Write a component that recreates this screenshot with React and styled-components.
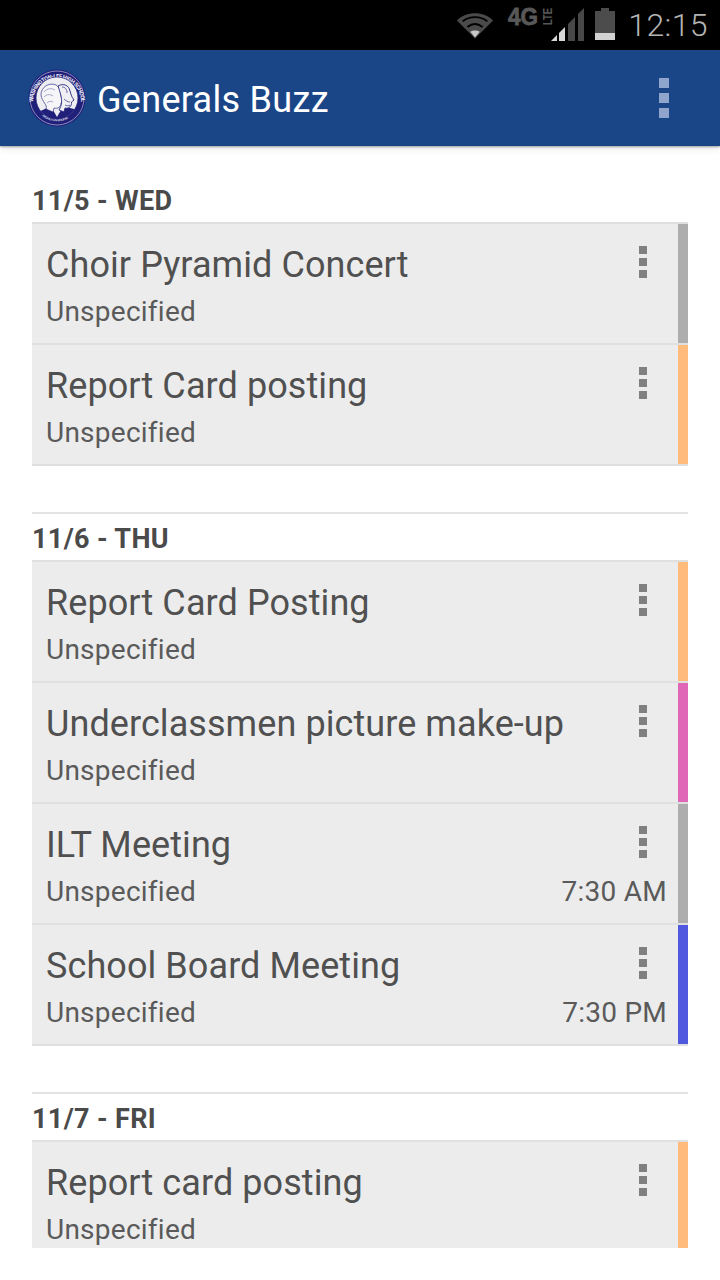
import React from "react";
import styled, { createGlobalStyle } from "styled-components";

const GlobalStyle = createGlobalStyle`
  html, body {
    margin: 0;
    padding: 0;
    background: #ffffff;
    font-family: Roboto, "Liberation Sans", sans-serif;
  }
`;

const Screen = styled.div`
  width: 720px;
  height: 1280px;
  background: #ffffff;
  overflow: hidden;
  display: flex;
  flex-direction: column;
`;

const StatusBar = styled.div`
  height: 50px;
  flex: none;
  background: #000000;
  display: flex;
  align-items: center;
  justify-content: flex-end;
  padding-right: 12px;
  box-sizing: border-box;
`;

const Clock = styled.span`
  font-size: 32px;
  font-weight: 300;
  color: #b4b4b4;
  margin-left: 12px;
  letter-spacing: 0.4px;
`;

const AppBar = styled.header`
  height: 96px;
  flex: none;
  background: #1a4688;
  display: flex;
  align-items: center;
  padding: 0 51px 0 28px;
  box-shadow: 0 1px 2px rgba(0, 0, 0, 0.35), 0 3px 8px rgba(0, 0, 0, 0.08);
  position: relative;
  z-index: 1;
`;

const Title = styled.h1`
  flex: 1;
  margin: 4px 0 0 11px;
  font-size: 36px;
  font-weight: 400;
  letter-spacing: 0.3px;
  color: #ffffff;
`;

const Dots = styled.div`
  display: flex;
  flex-direction: column;
  gap: ${(p) => p.$gap}px;
`;

const Dot = styled.span`
  display: block;
  width: ${(p) => p.$w}px;
  height: ${(p) => p.$h}px;
  background: ${(p) => p.$color};
`;

const Content = styled.main`
  height: 1102px;
  flex: none;
  overflow: hidden;
  padding: 0 32px;
  box-sizing: border-box;
`;

const Section = styled.section`
  padding-top: ${(p) => (p.$first ? 38 : 0)}px;
  margin-bottom: 46px;
  border-top: ${(p) => (p.$first ? "none" : "2px solid #e3e3e3")};
`;

const DayLabel = styled.h2`
  margin: 0;
  line-height: 32px;
  padding-top: ${(p) => (p.$first ? 1 : 9)}px;
  box-sizing: border-box;
  font-size: 27px;
  font-weight: 700;
  letter-spacing: 0.35px;
  color: #4a4a4a;
  height: ${(p) => (p.$first ? 38 : 46)}px;
`;

const List = styled.div`
  border-top: 2px solid #e0e0e0;
  border-bottom: 2px solid #e0e0e0;
  background: #e0e0e0;
  display: flex;
  flex-direction: column;
  gap: 2px;
`;

const Row = styled.article`
  height: 119px;
  background: #ececec;
  display: flex;
  position: relative;
`;

const RowBody = styled.div`
  flex: 1;
  min-width: 0;
  padding: 18px 0 0 14px;
`;

const EventName = styled.div`
  font-size: 36px;
  line-height: 46px;
  font-weight: 400;
  letter-spacing: 0.08px;
  color: #505050;
`;

const MetaLine = styled.div`
  display: flex;
  justify-content: space-between;
  padding-right: 11px;
  margin-top: 4px;
  font-size: 28px;
  line-height: 40px;
  letter-spacing: 0.25px;
  color: #5a5a5a;
`;

const RowMenu = styled.div`
  position: absolute;
  top: 22px;
  right: 41px;
`;

const ColorStripe = styled.div`
  width: 10px;
  flex: none;
  background: ${(p) => p.$color};
`;

const StatusIcons = () => (
  <>
    <svg width="38" height="28.5" viewBox="0 0 40 30" style={{ marginRight: 13, marginTop: -1 }}>
      <path d="M1 11 C11 1 29 1 39 11 L20 30 Z" fill="#4a4a4a" />
      <path d="M7 12 C14 6 26 6 33 12" fill="none" stroke="#000" strokeWidth="2" />
      <path d="M12 18 C17 14 23 14 28 18" fill="none" stroke="#000" strokeWidth="2" />
      <path d="M15 23 C18 21 22 21 25 23 L20 29 Z" fill="#c8c8c8" />
    </svg>
    <svg width="50" height="50" viewBox="0 -4 50 50" style={{ marginRight: -7 }}>
      <text
        x="1"
        y="21"
        fontSize="24"
        fontWeight="700"
        fontFamily="'Liberation Sans', sans-serif"
        fill="#585858"
        stroke="#585858"
        strokeWidth="0.8"
        textLength="30"
        lengthAdjust="spacingAndGlyphs"
      >
        4G
      </text>
      <text
        transform="translate(45 21) rotate(-90)"
        fontSize="12"
        fontWeight="700"
        fontFamily="'Liberation Sans', sans-serif"
        fill="#585858"
        textLength="17"
        lengthAdjust="spacingAndGlyphs"
      >
        LTE
      </text>
    </svg>
    <svg width="36" height="42" viewBox="0 0 36 42" style={{ marginBottom: 6 }}>
      <path d="M1 40 L7 34 V40 Z" fill="#d8d8d8" />
      <path d="M9 40 V32 L15 26 V40 Z" fill="#d8d8d8" />
      <path d="M18 40 V23 L25 16 V40 Z" fill="#484848" />
      <path d="M28 40 V13 L34 7 V40 Z" fill="#484848" />
    </svg>
    <svg width="22" height="32" viewBox="0 0 22 32" style={{ marginLeft: 8, marginTop: -2 }}>
      <path d="M7 0 H15 V3 H21 V32 H1 V3 H7 Z" fill="#4c4c4c" />
      <rect x="1" y="25" width="20" height="7" fill="#d2d2d2" />
    </svg>
  </>
);

const SchoolLogo = () => (
  <svg width="58" height="58" viewBox="0 0 58 58">
    <defs>
      <path id="logoArc" d="M5 33 A24 24 0 0 1 53 33" />
      <path id="logoArcLow" d="M14 47 A24 24 0 0 0 44 47" />
      <clipPath id="logoInner">
        <circle cx="29" cy="29" r="21" />
      </clipPath>
    </defs>
    <circle cx="29" cy="29" r="28.5" fill="#20207a" />
    <circle cx="29" cy="29" r="27" fill="none" stroke="#b9b9d8" strokeWidth="0.7" />
    <text fontSize="5.6" fill="#f0f0f8" fontFamily="Roboto, sans-serif" fontWeight="700">
      <textPath href="#logoArc" textLength="75">WASHINGTON-LEE HIGH SCHOOL</textPath>
    </text>
    <text fontSize="3.8" fill="#f0f0f8" fontFamily="Roboto, sans-serif">
      <textPath href="#logoArcLow" textLength="28">ARLINGTON VIRGINIA</textPath>
    </text>
    <g clipPath="url(#logoInner)">
      <rect x="8" y="8" width="42" height="42" fill="#eeeef2" />
      {/* coats */}
      <path d="M8 44 L19 39 L29 43 L38 38 L50 41 V50 H8 Z" fill="#20207a" />
      <path d="M25 41 L29 48 L33 41 Z" fill="#eeeef2" />
      {/* rear head */}
      <path
        d="M13 26 C13 18 21 13 28 16 C32 18 33 23 33 27 L35 32 L33 34 C33 38 30 40 26 39 L25 43 L18 40 C20 36 14 33 13 26 Z"
        fill="#f6f6f8"
        stroke="#30308a"
        strokeWidth="0.7"
      />
      <path d="M16 23 C19 19 24 19 27 21 M16 28 C19 25 22 25 25 27 M19 34 C21 32 23 32 25 33" fill="none" stroke="#7070ac" strokeWidth="0.6" />
      {/* front head */}
      <path
        d="M30 17 C35 14 41 16 42 22 C43 25 43 27 46 31 L43.5 33 C44 37 41 40 37 39 L36 43 L31 41 C34 36 34 32 33 27 C32 23 31 20 30 17 Z"
        fill="#f0f0f4"
        stroke="#24247e"
        strokeWidth="0.9"
      />
      <path d="M34 18 C37 18 39 20 39 24 M36 30 C38 32 40 33 42 33 M37 36 C39 37 41 37 42 36" fill="none" stroke="#30308a" strokeWidth="0.7" />
    </g>
    <circle cx="29" cy="29" r="21" fill="none" stroke="#20207a" strokeWidth="0.7" />
  </svg>
);

const days = [
  {
    label: "11/5 - WED",
    events: [
      { name: "Choir Pyramid Concert", color: "#adadad" },
      { name: "Report Card posting", color: "#ffbb7b" },
    ],
  },
  {
    label: "11/6 - THU",
    events: [
      { name: "Report Card Posting", color: "#ffbb7b" },
      { name: "Underclassmen picture make-up", color: "#e066b8" },
      { name: "ILT Meeting", time: "7:30 AM", color: "#adadad" },
      { name: "School Board Meeting", time: "7:30 PM", color: "#5058e0" },
    ],
  },
  {
    label: "11/7 - FRI",
    events: [{ name: "Report card posting", color: "#ffbb7b" }],
  },
];

const App = () => {
  return (
    <Screen>
      <GlobalStyle />
      <StatusBar>
        <StatusIcons />
        <Clock>12:15</Clock>
      </StatusBar>
      <AppBar>
        <SchoolLogo />
        <Title>Generals Buzz</Title>
        <Dots $gap={5}>
          <Dot $w={10} $h={10} $color="#8fa5cb" />
          <Dot $w={10} $h={10} $color="#8fa5cb" />
          <Dot $w={10} $h={10} $color="#8fa5cb" />
        </Dots>
      </AppBar>
      <Content>
        {days.map((day, i) => (
          <Section key={day.label} $first={i === 0}>
            <DayLabel $first={i === 0}>{day.label}</DayLabel>
            <List>
              {day.events.map((ev) => (
                <Row key={ev.name}>
                  <RowBody>
                    <EventName>{ev.name}</EventName>
                    <MetaLine>
                      <span>Unspecified</span>
                      {ev.time && <span>{ev.time}</span>}
                    </MetaLine>
                  </RowBody>
                  <RowMenu>
                    <Dots $gap={4}>
                      <Dot $w={8} $h={8} $color="#808080" />
                      <Dot $w={8} $h={8} $color="#808080" />
                      <Dot $w={8} $h={8} $color="#808080" />
                    </Dots>
                  </RowMenu>
                  <ColorStripe $color={ev.color} />
                </Row>
              ))}
            </List>
          </Section>
        ))}
      </Content>
    </Screen>
  );
};

export default App;
